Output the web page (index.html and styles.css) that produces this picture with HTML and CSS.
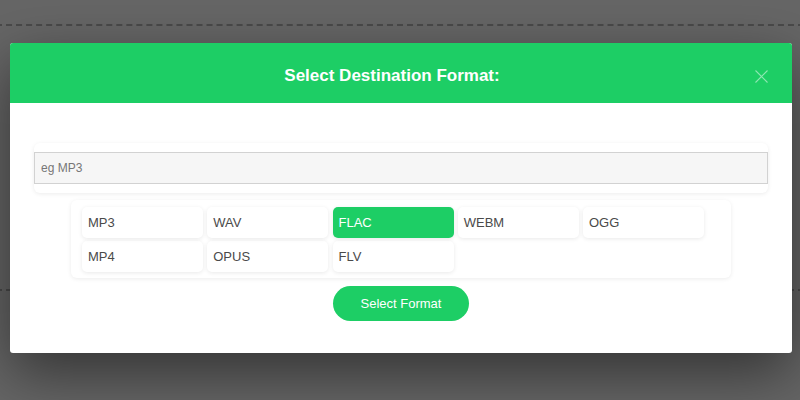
FILE: index.html
```html
<!DOCTYPE html>
<html lang="en">
<head>
  <meta charset="UTF-8">
  <title>Select Destination Format</title>
  <link rel="stylesheet" href="styles.css">
</head>
<body>
  <div class="page">
    <div class="drop-area"></div>
  </div>

  <!-- format picker dialog -->
  <div class="modal">
    <div class="modal-header">
      <h2>Select Destination Format:</h2>
      <button class="modal-close" aria-label="Close">
        <svg width="13" height="13" viewBox="0 0 13 13">
          <path d="M0.5 0.5 L12.5 12.5 M12.5 0.5 L0.5 12.5" stroke="rgba(255,255,255,0.5)" stroke-width="1.1" fill="none"/>
        </svg>
      </button>
    </div>
    <div class="modal-body">
      <div class="search-box">
        <input type="text" placeholder="eg MP3">
      </div>
      <div class="format-list">
        <div class="format">MP3</div>
        <div class="format">WAV</div>
        <div class="format selected">FLAC</div>
        <div class="format">WEBM</div>
        <div class="format">OGG</div>
        <div class="format">MP4</div>
        <div class="format">OPUS</div>
        <div class="format">FLV</div>
      </div>
      <button class="select-btn">Select Format</button>
    </div>
  </div>
</body>
</html>
```

FILE: styles.css
```css
body {
  margin: 0;
  font-family: "Liberation Sans", Arial, sans-serif;
  background-color: #666;
  height: 400px;
  overflow: hidden;
  position: relative;
}

.page {
  padding-top: 24px;
}

.drop-area {
  height: 263px;
  border-top: 2px dashed #4a4a4a;
  border-bottom: 2px dashed #4a4a4a;
  margin: 0 -4px;
}

.modal {
  position: absolute;
  top: 43px;
  left: 10px;
  width: 782px;
  background-color: white;
  border-radius: 3px;
  box-shadow: 0 20px 60px rgba(0, 0, 0, 0.5);
}

.modal-header {
  position: relative;
  height: 60px;
  box-sizing: border-box;
  padding: 6px 18px 0 0;
  background-color: #1dce65;
  border-radius: 3px 3px 0 0;
  display: flex;
  align-items: center;
  justify-content: center;
}

.modal-header h2 {
  margin: 0;
  color: white;
  font-size: 17px;
  font-weight: bold;
}

.modal-close {
  position: absolute;
  right: 24px;
  top: 27px;
  padding: 0;
  border: none;
  background: none;
  line-height: 0;
}

.modal-body {
  padding: 40px 24px 32px;
  display: flex;
  flex-direction: column;
  align-items: center;
}

.search-box {
  align-self: stretch;
  padding: 9px 0;
  border-radius: 6px;
  box-shadow: 0 1px 4px rgba(0, 0, 0, 0.08);
}

.search-box input {
  display: block;
  width: 100%;
  box-sizing: border-box;
  height: 32px;
  padding: 0 6px;
  border: 1px solid #d2d2d2;
  background-color: #f6f6f6;
  font-family: inherit;
  font-size: 12px;
  color: #555;
}

.search-box input::placeholder {
  color: #777;
}

.format-list {
  margin-top: 7px;
  width: 660px;
  box-sizing: border-box;
  padding: 7px 11px 6px;
  display: grid;
  grid-template-columns: repeat(5, 121px);
  gap: 3px 4.25px;
  border-radius: 6px;
  box-shadow: 0 1px 4px rgba(0, 0, 0, 0.08);
}

.format {
  height: 31px;
  padding: 0 6px;
  display: flex;
  align-items: center;
  font-size: 13px;
  color: #4a4a4a;
  border-radius: 5px;
  box-shadow: 0 1px 4px rgba(0, 0, 0, 0.09);
}

.format.selected {
  background-color: #1dce65;
  color: white;
}

.select-btn {
  margin-top: 8px;
  width: 136px;
  height: 35px;
  border: none;
  border-radius: 18px;
  background-color: #1dce65;
  color: white;
  font-family: inherit;
  font-size: 13px;
}
```
